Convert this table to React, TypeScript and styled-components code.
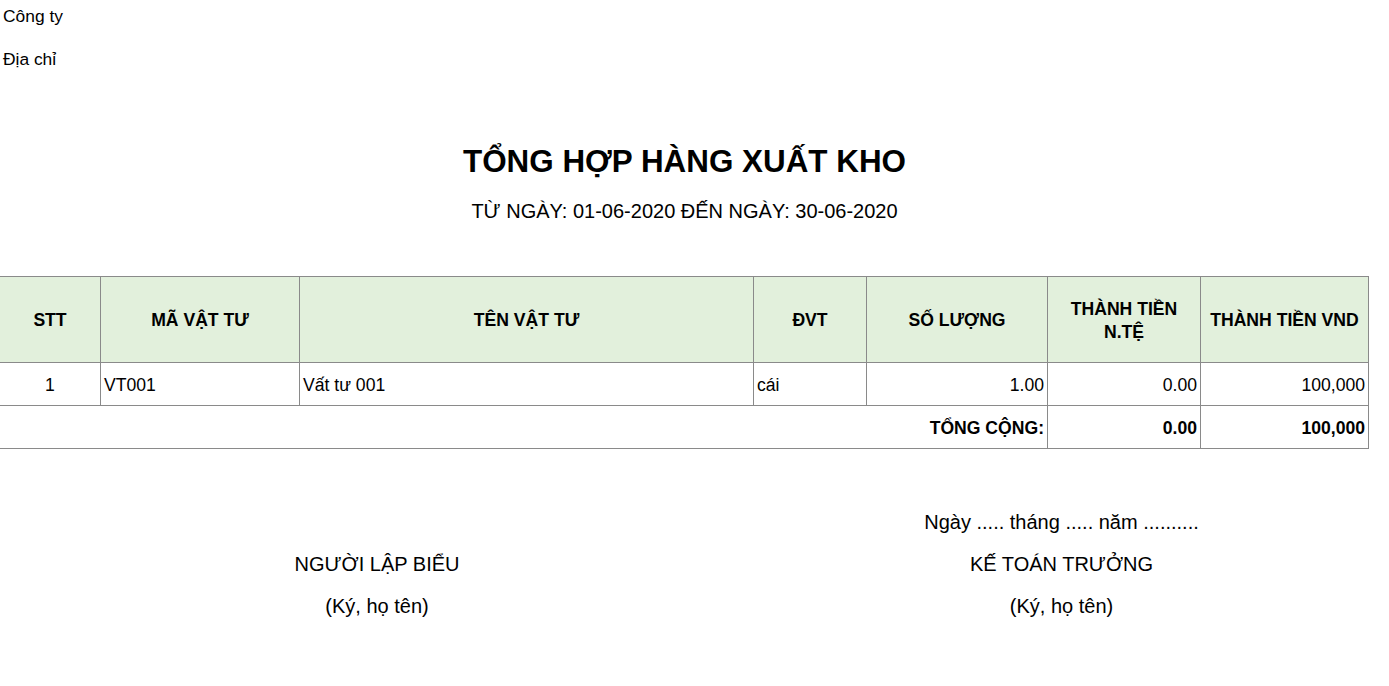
import React from "react";
import styled, { createGlobalStyle } from "styled-components";

const GlobalStyle = createGlobalStyle`
  html, body {
    margin: 0;
    padding: 0;
    background: #ffffff;
    color: #000000;
    font-family: "Liberation Sans", Arial, sans-serif;
  }
`;

const Page = styled.div`
  width: 1389px;
  display: flex;
  flex-direction: column;
`;

const CompanyInfo = styled.div`
  display: flex;
  flex-direction: column;
  gap: 11px;
  padding-left: 3px;
  font-size: 17.4px;
`;

const InfoLine = styled.div`
  line-height: 32px;
  height: 32px;
`;

const Title = styled.h1`
  margin: 67px 0 0;
  width: 1369px;
  text-align: center;
  font-size: 31.4px;
  font-weight: 700;
  line-height: 40px;
`;

const Subtitle = styled.div`
  margin-top: 14px;
  width: 1369px;
  text-align: center;
  font-size: 20px;
  line-height: 30px;
`;

const COLS = "101px 199px 454px 113px 181px 153px 168px";

const Table = styled.div`
  margin-top: 50px;
  width: 1369px;
  display: grid;
  grid-template-columns: ${COLS};
  border-top: 1px solid #8a8a8a;
  font-size: 17.6px;
`;

const Cell = styled.div<{ $align?: "left" | "center" | "right"; $bold?: boolean; $head?: boolean; $span?: number }>`
  box-sizing: border-box;
  display: flex;
  align-items: center;
  justify-content: ${(p) =>
    p.$align === "right" ? "flex-end" : p.$align === "center" ? "center" : "flex-start"};
  text-align: ${(p) => p.$align || "left"};
  height: ${(p) => (p.$head ? "86px" : "43px")};
  padding: 2px 3px 0 3px;
  border-right: 1px solid #8a8a8a;
  border-bottom: 1px solid #8a8a8a;
  background: ${(p) => (p.$head ? "#e2f0dc" : "#ffffff")};
  font-weight: ${(p) => (p.$bold || p.$head ? 700 : 400)};
  line-height: 23px;
  white-space: pre-line;
  ${(p) => (p.$span ? `grid-column: span ${p.$span};` : "")}
`;

const SignGrid = styled.div`
  margin-top: 58px;
  width: 1369px;
  display: grid;
  grid-template-columns: 754px 615px;
  row-gap: 12px;
  font-size: 20px;
`;

const SignLine = styled.div`
  text-align: center;
  line-height: 30px;
  height: 30px;
`;

const headers: { label: string }[] = [
  { label: "STT" },
  { label: "MÃ VẬT TƯ" },
  { label: "TÊN VẬT TƯ" },
  { label: "ĐVT" },
  { label: "SỐ LƯỢNG" },
  { label: "THÀNH TIỀN\nN.TỆ" },
  { label: "THÀNH TIỀN VND" },
];

const rows = [
  { stt: "1", code: "VT001", name: "Vất tư 001", unit: "cái", qty: "1.00", fc: "0.00", vnd: "100,000" },
];

export default function App() {
  return (
    <Page>
      <GlobalStyle />
      <CompanyInfo>
        <InfoLine>Công ty</InfoLine>
        <InfoLine>Địa chỉ</InfoLine>
      </CompanyInfo>
      <Title>TỔNG HỢP HÀNG XUẤT KHO</Title>
      <Subtitle>TỪ NGÀY: 01-06-2020 ĐẾN NGÀY: 30-06-2020</Subtitle>
      <Table>
        {headers.map((h) => (
          <Cell key={h.label} $head $align="center">
            {h.label}
          </Cell>
        ))}
        {rows.map((r) => (
          <React.Fragment key={r.code}>
            <Cell $align="center">{r.stt}</Cell>
            <Cell>{r.code}</Cell>
            <Cell>{r.name}</Cell>
            <Cell>{r.unit}</Cell>
            <Cell $align="right">{r.qty}</Cell>
            <Cell $align="right">{r.fc}</Cell>
            <Cell $align="right">{r.vnd}</Cell>
          </React.Fragment>
        ))}
        <Cell $span={5} $align="right" $bold>
          TỔNG CỘNG:
        </Cell>
        <Cell $align="right" $bold>
          0.00
        </Cell>
        <Cell $align="right" $bold>
          100,000
        </Cell>
      </Table>
      <SignGrid>
        <SignLine />
        <SignLine>Ngày ..... tháng ..... năm ..........</SignLine>
        <SignLine>NGƯỜI LẬP BIỂU</SignLine>
        <SignLine>KẾ TOÁN TRƯỞNG</SignLine>
        <SignLine>(Ký, họ tên)</SignLine>
        <SignLine>(Ký, họ tên)</SignLine>
      </SignGrid>
    </Page>
  );
}
